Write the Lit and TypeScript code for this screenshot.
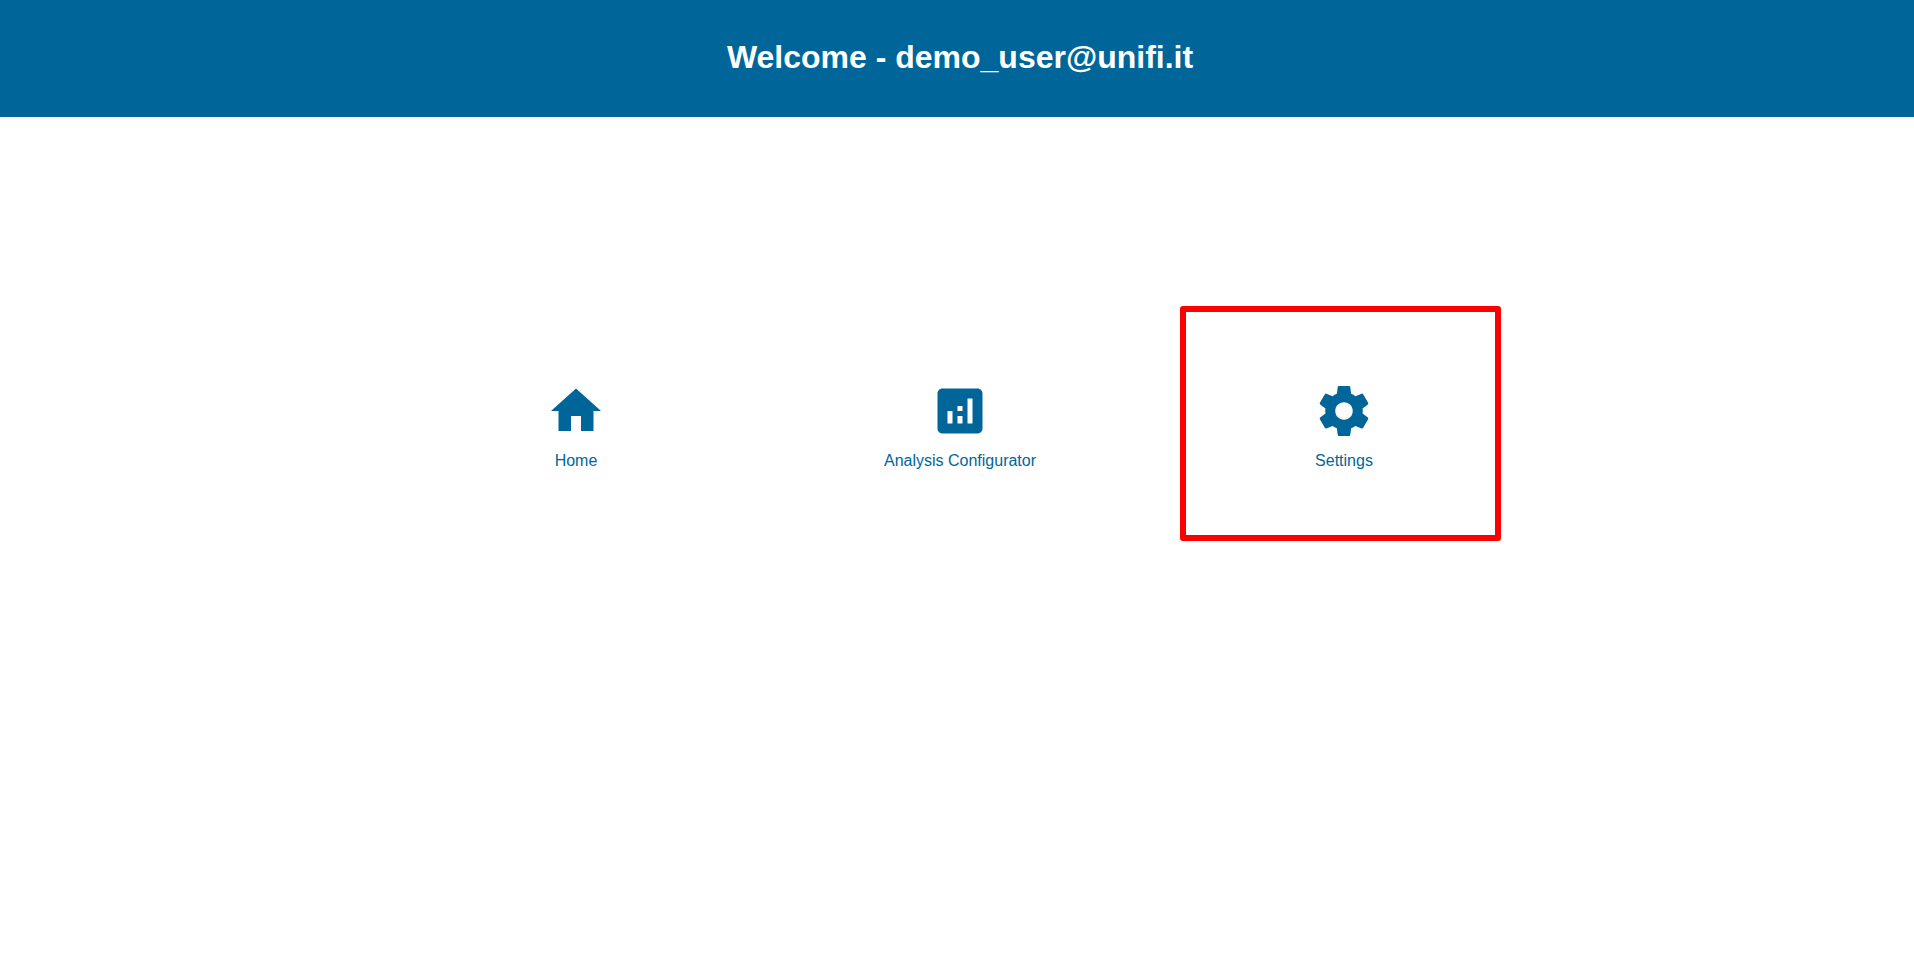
import { LitElement, html, css, svg } from "lit";
import { customElement } from "lit/decorators.js";

const items = [
  { label: "Home", active: false, icon: svg`<path d="M10 20v-6h4v6h5v-8h3L12 3 2 12h3v8z"/>` },
  {
    label: "Analysis Configurator",
    active: false,
    icon: svg`<path d="M19 3H5c-1.100 0-2 .9-2 2v14c0 1.100.9 2 2 2h14c1.100 0 2-.9 2-2V5c0-1.100-.9-2-2-2zM9 17H7v-5h2v5zm4 0h-2v-3h2v3zm0-5h-2v-2h2v2zm4 5h-2V7h2v10z"/>`,
  },
  {
    label: "Settings",
    active: true,
    icon: svg`<path d="M19.43 12.98c.04-.32.07-.64.07-.98s-.03-.66-.07-.98l2.11-1.65c.19-.15.24-.42.12-.64l-2-3.46c-.12-.22-.39-.3-.61-.22l-2.49 1c-.52-.4-1.08-.73-1.69-.98l-.38-2.65C14.46 2.18 14.25 2 14 2h-4c-.25 0-.46.18-.49.42l-.38 2.65c-.61.25-1.17.59-1.69.98l-2.49-1c-.23-.09-.49 0-.61.22l-2 3.46c-.13.22-.07.49.12.64l2.11 1.65c-.04.32-.07.65-.07.98s.03.66.07.98l-2.11 1.65c-.19.15-.24.42-.12.64l2 3.46c.12.22.39.3.61.22l2.49-1c.52.4 1.08.73 1.69.98l.38 2.65c.03.24.24.42.49.42h4c.25 0 .46-.18.49-.42l.38-2.65c.61-.25 1.17-.59 1.69-.98l2.49 1c.23.09.49 0 .61-.22l2-3.46c.12-.22.07-.49-.12-.64l-2.11-1.65zM12 15.500c-1.930 0-3.500-1.570-3.500-3.500s1.570-3.500 3.500-3.500 3.500 1.570 3.500 3.500-1.570 3.500-3.500 3.500z"/>`,
  },
];

@customElement("app-root")
export class AppRoot extends LitElement {
  static styles = css`
    :host {
      display: block;
      min-height: 100vh;
      background: #fff;
      color: #006699;
      font: 16px/20px "Liberation Sans", Arial, sans-serif;
    }
    header {
      padding: 39px 16px 41px 22px;
      background: #006699;
      color: #fff;
      text-align: center;
    }
    h1 {
      margin: 0;
      font-size: 32px;
      line-height: 37px;
    }
    main {
      padding: 189px 0 0 6px;
    }
    nav {
      display: grid;
      grid-template-columns: repeat(3, 1fr);
      max-width: 1152px;
      margin: 0 auto;
    }
    .card {
      position: relative;
      display: flex;
      flex-direction: column;
      align-items: center;
      gap: 10px;
      padding: 75px 0 70px;
      color: inherit;
      text-decoration: none;
    }
    .active::after {
      content: "";
      position: absolute;
      inset: 0 35px 0 28px;
      border: 6px solid #ff0000;
      border-radius: 3px;
    }
    .icon {
      width: 60px;
      height: 60px;
      fill: currentColor;
    }
  `;

  render() {
    return html`
      <header><h1>Welcome - demo_user@unifi.it</h1></header>
      <main>
        <nav aria-label="Main">
          ${items.map(
            (item) => html`<a class="card ${item.active ? "active" : ""}" href="#">
              <svg class="icon" viewBox="0 0 24 24" aria-hidden="true">${item.icon}</svg>
              <span>${item.label}</span>
            </a>`
          )}
        </nav>
      </main>
    `;
  }
}
